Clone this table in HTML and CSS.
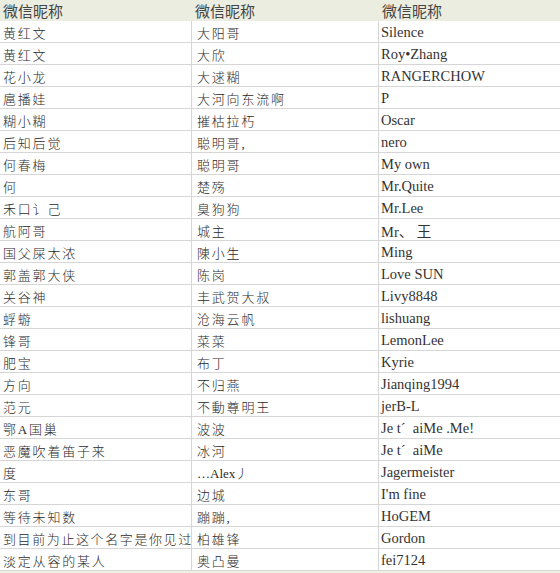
FILE: index.html
```html
<!DOCTYPE html>
<html lang="zh">
<head>
<meta charset="utf-8">
<title>微信昵称</title>
<link rel="stylesheet" href="styles.css">
</head>
<body>
<div class="sheet">
  <div class="head">
    <div class="h">微信昵称</div><div class="h">微信昵称</div><div class="h h3">微信昵称</div>
  </div>
  <div class="rows">
    <div class="row"><div class="c zh">黄红文</div><div class="c zh">大阳哥</div><div class="c en">Silence</div></div>
    <div class="row"><div class="c zh">黄红文</div><div class="c zh">大欣</div><div class="c en">Roy•Zhang</div></div>
    <div class="row"><div class="c zh">花小龙</div><div class="c zh">大逑糊</div><div class="c en">RANGERCHOW</div></div>
    <div class="row"><div class="c zh">扈播娃</div><div class="c zh">大河向东流啊</div><div class="c en">P</div></div>
    <div class="row"><div class="c zh">糊小糊</div><div class="c zh">摧枯拉朽</div><div class="c en">Oscar</div></div>
    <div class="row"><div class="c zh">后知后觉</div><div class="c zh">聪明哥,</div><div class="c en">nero</div></div>
    <div class="row"><div class="c zh">何春梅</div><div class="c zh">聪明哥</div><div class="c en">My own</div></div>
    <div class="row"><div class="c zh">何</div><div class="c zh">楚殇</div><div class="c en">Mr.Quite</div></div>
    <div class="row"><div class="c zh">禾口讠己</div><div class="c zh">臭狗狗</div><div class="c en">Mr.Lee</div></div>
    <div class="row"><div class="c zh">航阿哥</div><div class="c zh">城主</div><div class="c en">Mr、 王</div></div>
    <div class="row"><div class="c zh">国父屎太浓</div><div class="c zh">陳小生</div><div class="c en">Ming</div></div>
    <div class="row"><div class="c zh">郭盖郭大侠</div><div class="c zh">陈岗</div><div class="c en">Love SUN</div></div>
    <div class="row"><div class="c zh">关谷神</div><div class="c zh">丰武贺大叔</div><div class="c en">Livy8848</div></div>
    <div class="row"><div class="c zh">蜉蝣</div><div class="c zh">沧海云帆</div><div class="c en">lishuang</div></div>
    <div class="row"><div class="c zh">锋哥</div><div class="c zh">菜菜</div><div class="c en">LemonLee</div></div>
    <div class="row"><div class="c zh">肥宝</div><div class="c zh">布丁</div><div class="c en">Kyrie</div></div>
    <div class="row"><div class="c zh">方向</div><div class="c zh">不归燕</div><div class="c en">Jianqing1994</div></div>
    <div class="row"><div class="c zh">范元</div><div class="c zh">不動尊明王</div><div class="c en">jerB-L</div></div>
    <div class="row"><div class="c zh">鄂A国巢</div><div class="c zh">波波</div><div class="c en">Je t´&nbsp; aiMe .Me!</div></div>
    <div class="row"><div class="c zh">恶魔吹着笛子来</div><div class="c zh">冰河</div><div class="c en">Je t´&nbsp; aiMe</div></div>
    <div class="row"><div class="c zh">度</div><div class="c zh tight">…Alex丿</div><div class="c en">Jagermeister</div></div>
    <div class="row"><div class="c zh">东哥</div><div class="c zh">边城</div><div class="c en">I'm fine</div></div>
    <div class="row"><div class="c zh">等待未知数</div><div class="c zh">蹦蹦,</div><div class="c en">HoGEM</div></div>
    <div class="row"><div class="c zh clip">到目前为止这个名字是你见过</div><div class="c zh">柏雄锋</div><div class="c en">Gordon</div></div>
    <div class="row"><div class="c zh">淡定从容的某人</div><div class="c zh">奥凸曼</div><div class="c en">fei7124</div></div>
  </div>
</div>
</body>
</html>
```

FILE: styles.css
```css
html, body {
  margin: 0;
  padding: 0;
}
body {
  background: #eef0e5;
  width: 560px;
  height: 573px;
  overflow: hidden;
}
.sheet {
  width: 560px;
}
.head {
  display: grid;
  grid-template-columns: 192px 187px 181px;
  height: 21px;
  background: #ebede0;
}
.h {
  font-family: "Noto Sans CJK SC", sans-serif;
  font-size: 15px;
  color: #444;
  line-height: 21px;
  padding-left: 3px;
  white-space: nowrap;
  overflow: hidden;
}
.h3 {
  padding-left: 3px;
}
.rows {
  background: #fff;
}
.row {
  display: grid;
  grid-template-columns: 192px 187px 181px;
  height: 22px;
  box-sizing: border-box;
  border-bottom: 1px solid #d6d6d6;
}
.c {
  white-space: nowrap;
  overflow: hidden;
  display: flex;
  align-items: center;
  padding-top: 1px;
  color: #2a2a2a;
}
.c:nth-child(1), .c:nth-child(2) {
  border-right: 1px solid #d6d6d6;
}
.zh {
  font-family: "Liberation Serif", "Noto Sans CJK SC", serif;
  font-weight: 300;
  font-size: 13px;
  letter-spacing: 1.8px;
  padding-left: 3px;
}
.c:nth-child(2).zh {
  padding-left: 5px;
}
.zh.tight {
  letter-spacing: 0;
}
.zh.clip {
  letter-spacing: 1.6px;
}
.en {
  font-family: "Liberation Serif", "Noto Sans CJK SC", serif;
  font-size: 14.5px;
  color: #333;
  padding-left: 2px;
}
```
